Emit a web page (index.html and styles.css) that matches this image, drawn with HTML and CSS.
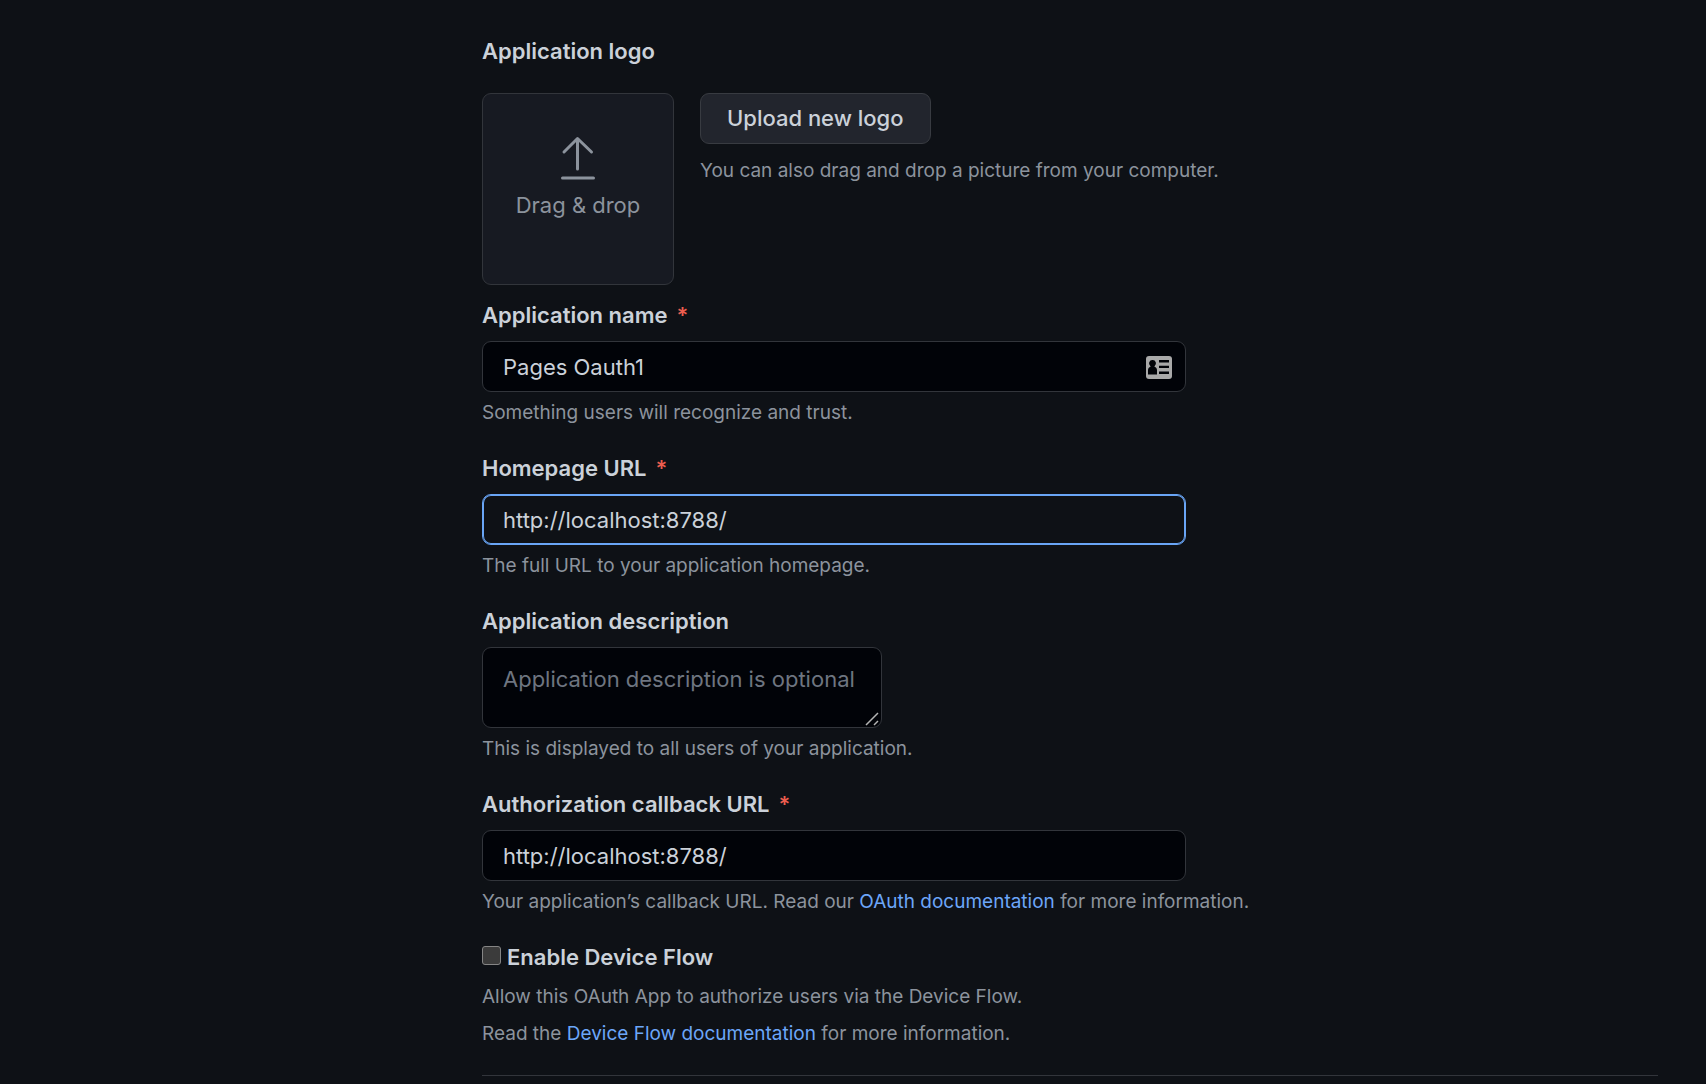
FILE: index.html
```html
<!DOCTYPE html>
<html lang="en">
<head>
  <meta charset="UTF-8">
  <meta name="viewport" content="width=device-width, initial-scale=1.0">
  <title>OAuth application settings</title>
  <link rel="stylesheet" href="styles.css">
</head>
<body>

  <main class="settings">
    <form class="app-form">

      <h2 class="form-title">Application logo</h2>
      <div class="logo-row">
        <div class="drop-zone">
          <svg class="upload-icon" width="36" height="46" viewBox="0 0 36 46" fill="none" stroke="currentColor" stroke-width="3" stroke-linecap="round" stroke-linejoin="round" aria-hidden="true">
            <path d="M17.500 34V4M4 17L17.500 3.500L31.500 17M2.500 43H33.500"/>
          </svg>
          <span>Drag &amp; drop</span>
        </div>
        <div class="upload">
          <button type="button" class="button">Upload new logo</button>
          <p class="note">You can also drag and drop a picture from your computer.</p>
        </div>
      </div>

      <div class="field">
        <label class="required" for="appName">Application name</label>
        <div class="input-wrap">
          <input type="text" id="appName" class="text-input" value="Pages Oauth1" required>
          <svg class="card-icon" width="26" height="23" viewBox="0 0 26 23" aria-hidden="true">
            <rect width="26" height="23" rx="3" fill="#a9a9a9"/>
            <path d="M6.500 4a3.300 3.300 0 0 1 2.200 5.900c-.3.400-.2 1 .3 1.200 1.400.6 2 1.700 2 3.200v4.200H2v-4.200c0-1.500.6-2.600 2-3.200.5-.2.600-.8.300-1.200A3.300 3.300 0 0 1 6.500 4zM13 4h10v2.400H13zM13 9.700h10v2.400H13zM13 15.500h10v2.400H13z" fill="#010308"/>
          </svg>
        </div>
        <p class="note">Something users will recognize and trust.</p>
      </div>

      <div class="field">
        <label class="required" for="homepageUrl">Homepage URL</label>
        <input type="text" id="homepageUrl" class="text-input active" value="http://localhost:8788/" required>
        <p class="note">The full URL to your application homepage.</p>
      </div>

      <div class="field">
        <label for="description">Application description</label>
        <div class="textarea-wrap">
          <textarea id="description" class="text-input" placeholder="Application description is optional"></textarea>
          <svg class="grip" width="14" height="14" viewBox="0 0 14 14" stroke="#b4b4b4" stroke-width="1.500" aria-hidden="true">
            <path d="M1 13L13 1M9 13L13 9"/>
          </svg>
        </div>
        <p class="note">This is displayed to all users of your application.</p>
      </div>

      <div class="field">
        <label class="required" for="callbackUrl">Authorization callback URL</label>
        <input type="text" id="callbackUrl" class="text-input" value="http://localhost:8788/" required>
        <p class="note">Your application’s callback URL. Read our <a href="#">OAuth documentation</a> for more information.</p>
      </div>

      <div class="field device-flow">
        <div class="check-row">
          <input type="checkbox" id="deviceFlow">
          <label for="deviceFlow">Enable Device Flow</label>
        </div>
        <p class="note">Allow this OAuth App to authorize users via the Device Flow.</p>
        <p class="note">Read the <a href="#">Device Flow documentation</a> for more information.</p>
      </div>

    </form>
  </main>

</body>
</html>
```
FILE: styles.css
```css
* {
  margin: 0;
  padding: 0;
  box-sizing: border-box;
}

body {
  font-family: Inter, "Liberation Sans", sans-serif;
  font-size: 22px;
  line-height: 33px;
  background-color: #0e1116;
  color: #cbd1d9;
}

.settings {
  padding: 35px 48px 0 482px;
}

.app-form {
  border-bottom: 1px solid #32353b;
  padding-bottom: 27px;
}

.form-title, label {
  display: block;
  font-size: 22px;
  font-weight: 600;
}

.form-title {
  margin-bottom: 25px;
}

.logo-row {
  display: flex;
  gap: 26px;
  margin-bottom: 14px;
}

.drop-zone {
  display: flex;
  flex-direction: column;
  align-items: center;
  gap: 8px;
  width: 192px;
  height: 192px;
  padding-top: 41px;
  background-color: #171a22;
  border: 1px solid #32353b;
  border-radius: 9px;
  color: #8c939d;
}

.button {
  height: 51px;
  padding: 0 26px;
  font: inherit;
  font-weight: 500;
  color: #cbd1d9;
  background-color: #22252d;
  border: 1px solid #383b41;
  border-radius: 9px;
  cursor: pointer;
}

.upload .note {
  margin-top: 13px;
}

.field {
  margin-bottom: 25px;
}

.field label {
  margin-bottom: 9px;
}

/* Red asterisk after the label */
.required::after {
  content: "*";
  margin-left: 9px;
  color: #ec5e4f;
}

.input-wrap {
  position: relative;
  max-width: 704px;
}

.text-input {
  display: block;
  width: 100%;
  max-width: 704px;
  height: 51px;
  padding: 0 20px;
  font: inherit;
  color: #cbd1d9;
  background-color: #010308;
  border: 1px solid #32353b;
  border-radius: 9px;
  outline: none;
}

.text-input.active,
.text-input:focus {
  background-color: #0e1116;
  border-color: #69a5f5;
  box-shadow: inset 0 0 0 1px #69a5f5;
}

.text-input::placeholder {
  color: #6e7580;
}

.card-icon {
  position: absolute;
  top: 15px;
  right: 14px;
}

.textarea-wrap {
  position: relative;
  max-width: 400px;
}

textarea.text-input {
  height: 81px;
  padding-top: 15px;
  resize: none;
}

.grip {
  position: absolute;
  right: 3px;
  bottom: 2px;
}

.note {
  margin-top: 7px;
  font-size: 19px;
  line-height: 28px;
  color: #8c939d;
}

a {
  color: #6ca6f9;
  text-decoration: none;
}

a:hover {
  text-decoration: underline;
}

.check-row {
  display: flex;
  align-items: center;
  gap: 6px;
}

.check-row label {
  margin-bottom: 0;
}

.check-row input {
  appearance: none;
  width: 19px;
  height: 19px;
  margin-bottom: 5px;
  background-color: #3b3b3b;
  border: 1px solid #858585;
  border-radius: 3px;
}

.check-row input:checked {
  background-color: #69a5f5;
}

.device-flow {
  margin-bottom: 0;
}

.device-flow .note {
  margin-top: 9px;
}
```
